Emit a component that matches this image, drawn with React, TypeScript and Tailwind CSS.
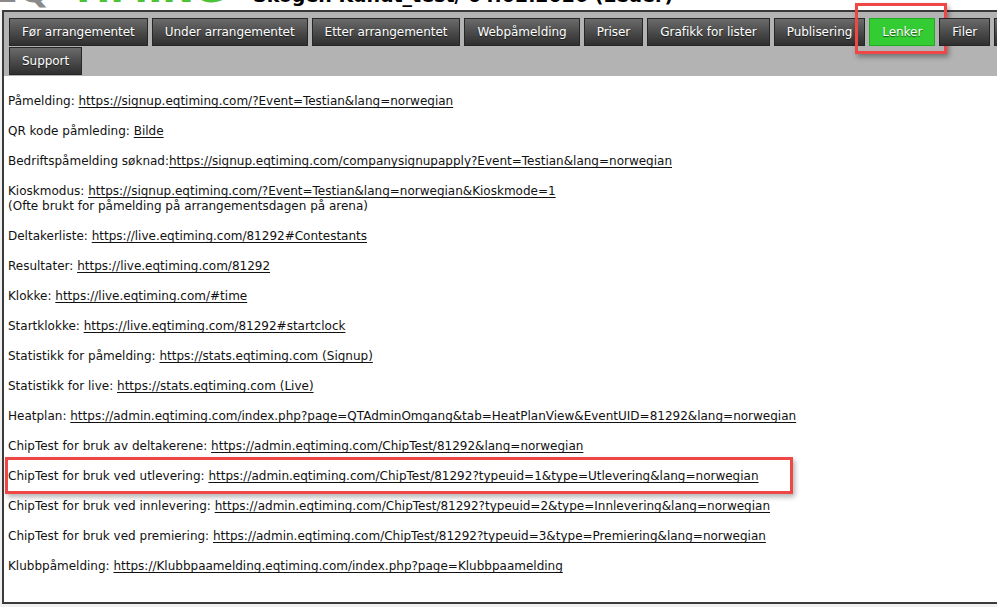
import React from "react";

type Item = { label: string; href: string; text?: string; sep?: string; note?: string; mark?: boolean };

const tabs = [
  "Før arrangementet",
  "Under arrangementet",
  "Etter arrangementet",
  "Webpåmelding",
  "Priser",
  "Grafikk for lister",
  "Publisering",
  "Lenker",
  "Filer",
  "Admin",
  "Support",
];

const links: Item[] = [
  { label: "Påmelding:", href: "https://signup.eqtiming.com/?Event=Testian&lang=norwegian" },
  { label: "QR kode påmleding:", href: "#", text: "Bilde" },
  { label: "Bedriftspåmelding søknad:", sep: "", href: "https://signup.eqtiming.com/companysignupapply?Event=Testian&lang=norwegian" },
  {
    label: "Kioskmodus:",
    href: "https://signup.eqtiming.com/?Event=Testian&lang=norwegian&Kioskmode=1",
    note: "(Ofte brukt for påmelding på arrangementsdagen på arena)",
  },
  { label: "Deltakerliste:", href: "https://live.eqtiming.com/81292#Contestants" },
  { label: "Resultater:", href: "https://live.eqtiming.com/81292" },
  { label: "Klokke:", href: "https://live.eqtiming.com/#time" },
  { label: "Startklokke:", href: "https://live.eqtiming.com/81292#startclock" },
  { label: "Statistikk for påmelding:", href: "#", text: "https://stats.eqtiming.com (Signup)" },
  { label: "Statistikk for live:", href: "#", text: "https://stats.eqtiming.com (Live)" },
  {
    label: "Heatplan:",
    href: "https://admin.eqtiming.com/index.php?page=QTAdminOmgang&tab=HeatPlanView&EventUID=81292&lang=norwegian",
  },
  { label: "ChipTest for bruk av deltakerene:", href: "https://admin.eqtiming.com/ChipTest/81292&lang=norwegian" },
  {
    label: "ChipTest for bruk ved utlevering:",
    href: "https://admin.eqtiming.com/ChipTest/81292?typeuid=1&type=Utlevering&lang=norwegian",
    mark: true,
  },
  {
    label: "ChipTest for bruk ved innlevering:",
    href: "https://admin.eqtiming.com/ChipTest/81292?typeuid=2&type=Innlevering&lang=norwegian",
  },
  {
    label: "ChipTest for bruk ved premiering:",
    href: "https://admin.eqtiming.com/ChipTest/81292?typeuid=3&type=Premiering&lang=norwegian",
  },
  { label: "Klubbpåmelding:", href: "https://Klubbpaamelding.eqtiming.com/index.php?page=Klubbpaamelding" },
];

function Tab({ name }: { name: string }) {
  const active = name === "Lenker";
  return (
    <div className="relative">
      <button
        className={
          "h-[28px] px-[12px] text-[12px] tracking-[-0.04px] text-white border [text-shadow:0_1px_1px_rgba(0,0,0,0.6)] " +
          (active
            ? "bg-[#33cc33] border-[#22aa22]"
            : "bg-gradient-to-b from-[#6b6b6b] to-[#2f2f2f] border-[#262626]")
        }
      >
        {name}
      </button>
      {active && (
        <div className="absolute left-[-14px] top-[-15px] w-[92px] h-[51px] border-[3px] border-[#ef4646] shadow-[2px_3px_5px_rgba(0,0,0,0.35)] pointer-events-none" />
      )}
    </div>
  );
}

export default function App() {
  return (
    <div
      className="w-[997px] h-[607px] overflow-hidden bg-[#f0f0f0] text-black"
      style={{ fontFamily: '"DejaVu Sans", Verdana, sans-serif' }}
    >
      {/* page header, scrolled mostly out of view */}
      <div className="h-[10px] overflow-hidden bg-white">
        <div className="flex items-baseline mt-[-33px] h-[47px] leading-[44px]">
          <div className="w-[253px] shrink-0 flex items-baseline">
            <span className="ml-[-8px] text-[38px] font-bold text-[#8a8a8a]">EQ</span>
            <span className="ml-[20px] text-[38px] font-bold text-[#4cc236]">TIMING</span>
          </div>
          <span className="text-[19px] font-bold text-black whitespace-nowrap">Skogen Kundt_test/ 04.02.2026 (Leder)</span>
        </div>
      </div>

      <div className="ml-[2px] h-[594px] border-2 border-r-0 border-[#3a3a3a] bg-white">
        {/* menu */}
        <nav className="bg-[#b3b3b3] pl-[5px] pt-[6px] pb-[1px] flex flex-wrap gap-x-[4px] gap-y-[1px] w-[1080px]">
          {tabs.map((t) => (
            <Tab key={t} name={t} />
          ))}
        </nav>

        {/* link list */}
        <div className="pl-[4px] pt-[18px] flex flex-col gap-[15px] text-[12px] leading-[15px] text-[#111]">
          {links.map((l) => (
            <div key={l.label} className="relative">
              <div>
                {l.label}
                {l.sep ?? " "}
                <a href={l.href} className="underline underline-offset-[2px] text-[#111]">
                  {l.text ?? l.href}
                </a>
              </div>
              {l.note && <div>{l.note}</div>}
              {l.mark && (
                <div className="absolute left-[-3px] top-[-12px] w-[788px] h-[37px] border-[3px] border-[#ef4646] shadow-[2px_3px_5px_rgba(0,0,0,0.3)] pointer-events-none" />
              )}
            </div>
          ))}
        </div>
      </div>
    </div>
  );
}
